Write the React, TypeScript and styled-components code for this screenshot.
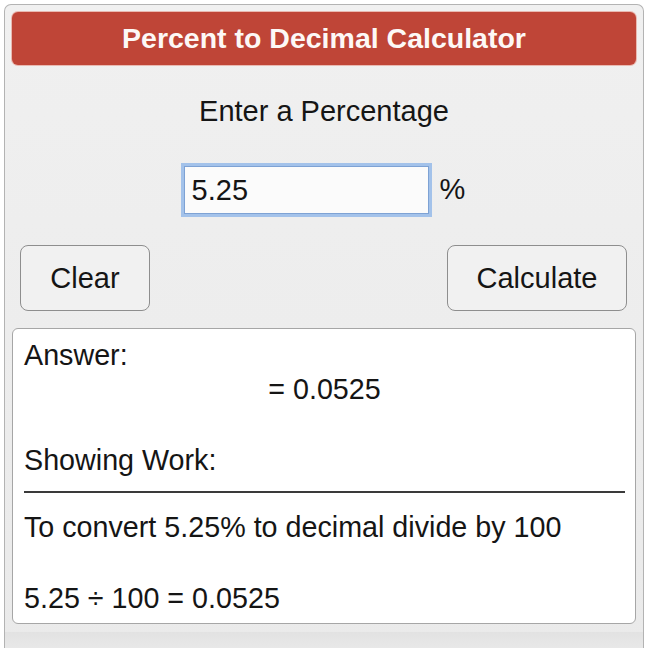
import styled, { createGlobalStyle } from 'styled-components';
import { ChangeEvent, useState } from 'react';

const GlobalStyle = createGlobalStyle`
  body {
    margin: 0;
    background: #ffffff;
    font-family: "Liberation Sans", Arial, sans-serif;
    color: #151515;
  }
`;

export default function App() {
  // 입력값
  const [value, setValue] = useState<string>('5.25');
  const [result, setResult] = useState<string>('0.0525');

  const onChange = (e: ChangeEvent<HTMLInputElement>) => setValue(e.target.value);
  const onClear = () => {
    setValue('');
    setResult('');
  };
  const onCalculate = () => {
    const n = parseFloat(value);
    if (!isNaN(n)) setResult(String(n / 100));
  };

  return (
    <>
      <GlobalStyle />
      <SPanel>
        <SHeader>Percent to Decimal Calculator</SHeader>
        <SLabel>Enter a Percentage</SLabel>
        <SInputRow>
          <SInput type="text" value={value} onChange={onChange} />
          <SUnit>%</SUnit>
        </SInputRow>
        <SButtonRow>
          <SButton $w={130} onClick={onClear}>Clear</SButton>
          <SButton $w={180} onClick={onCalculate}>Calculate</SButton>
        </SButtonRow>
        <SAnswer>
          <SLine>Answer:</SLine>
          <SResult>= {result}</SResult>
          <SLine $top={37}>Showing Work:</SLine>
          <SRule />
          <SLine $top={17}>To convert {value}% to decimal divide by 100</SLine>
          <SLine $top={37}>{value} ÷ 100 = {result}</SLine>
        </SAnswer>
        <SFooter />
      </SPanel>
    </>
  );
}

const SPanel = styled.div`
  margin: 4px 4px 0;
  border: 1px solid #b3b3b3;
  border-bottom: none;
  border-radius: 7px 7px 0 0;
  background: linear-gradient(#f0f0f0, #eaeaea);
  padding: 7px 7px 0;
  display: flex;
  flex-direction: column;
  align-items: stretch;
`;

const SHeader = styled.div`
  height: 53px;
  border-radius: 6px;
  background: #bf4537;
  box-shadow: 0 0 0 1px #e9b9b1;
  color: #fdf8f6;
  font-weight: bold;
  font-size: 28.5px;
  display: flex;
  align-items: center;
  justify-content: center;
`;

const SLabel = styled.div`
  text-align: center;
  font-size: 29px;
  line-height: 34px;
  margin-top: 29px;
`;

const SInputRow = styled.div`
  display: flex;
  align-items: center;
  justify-content: center;
  margin-top: 35px;
  padding-right: 2px;
  gap: 8px;
`;

const SInput = styled.input`
  box-sizing: border-box;
  width: 251px;
  height: 54px;
  border: 3px solid #a3c2ea;
  box-shadow: inset 0 0 0 1px #7ea2d4;
  outline: none;
  background: #fbfbfb;
  font-family: "Liberation Sans", Arial, sans-serif;
  font-size: 29px;
  color: #151515;
  padding: 0 8px;
`;

const SUnit = styled.span`
  font-size: 29px;
  padding-bottom: 2px;
`;

const SButtonRow = styled.div`
  display: flex;
  justify-content: space-between;
  margin-top: 28px;
  padding: 0 9px 0 8px;
`;

const SButton = styled.button<{ $w: number }>`
  width: ${(p) => p.$w}px;
  height: 66px;
  border: 1px solid #8e8e8e;
  border-radius: 8px;
  background: #f1f1f1;
  font-family: "Liberation Sans", Arial, sans-serif;
  font-size: 29px;
  color: #151515;
  cursor: pointer;
`;

const SAnswer = styled.div`
  margin-top: 17px;
  height: 296px;
  box-sizing: border-box;
  background: #ffffff;
  border: 1px solid #a6a6a6;
  border-radius: 6px;
  padding: 9px 10px 0 11px;
`;

const SLine = styled.div<{ $top?: number }>`
  font-size: 28.7px;
  line-height: 34px;
  margin-top: ${(p) => p.$top ?? 0}px;
`;

const SResult = styled.div`
  font-size: 28.7px;
  line-height: 34px;
  text-align: center;
`;

const SRule = styled.div`
  height: 2px;
  background: #3a3a3a;
  margin-top: 14px;
`;

const SFooter = styled.div`
  height: 26px;
  margin: 8px -7px 0;
  background: linear-gradient(#e2e2e2, #ececec);
`;
